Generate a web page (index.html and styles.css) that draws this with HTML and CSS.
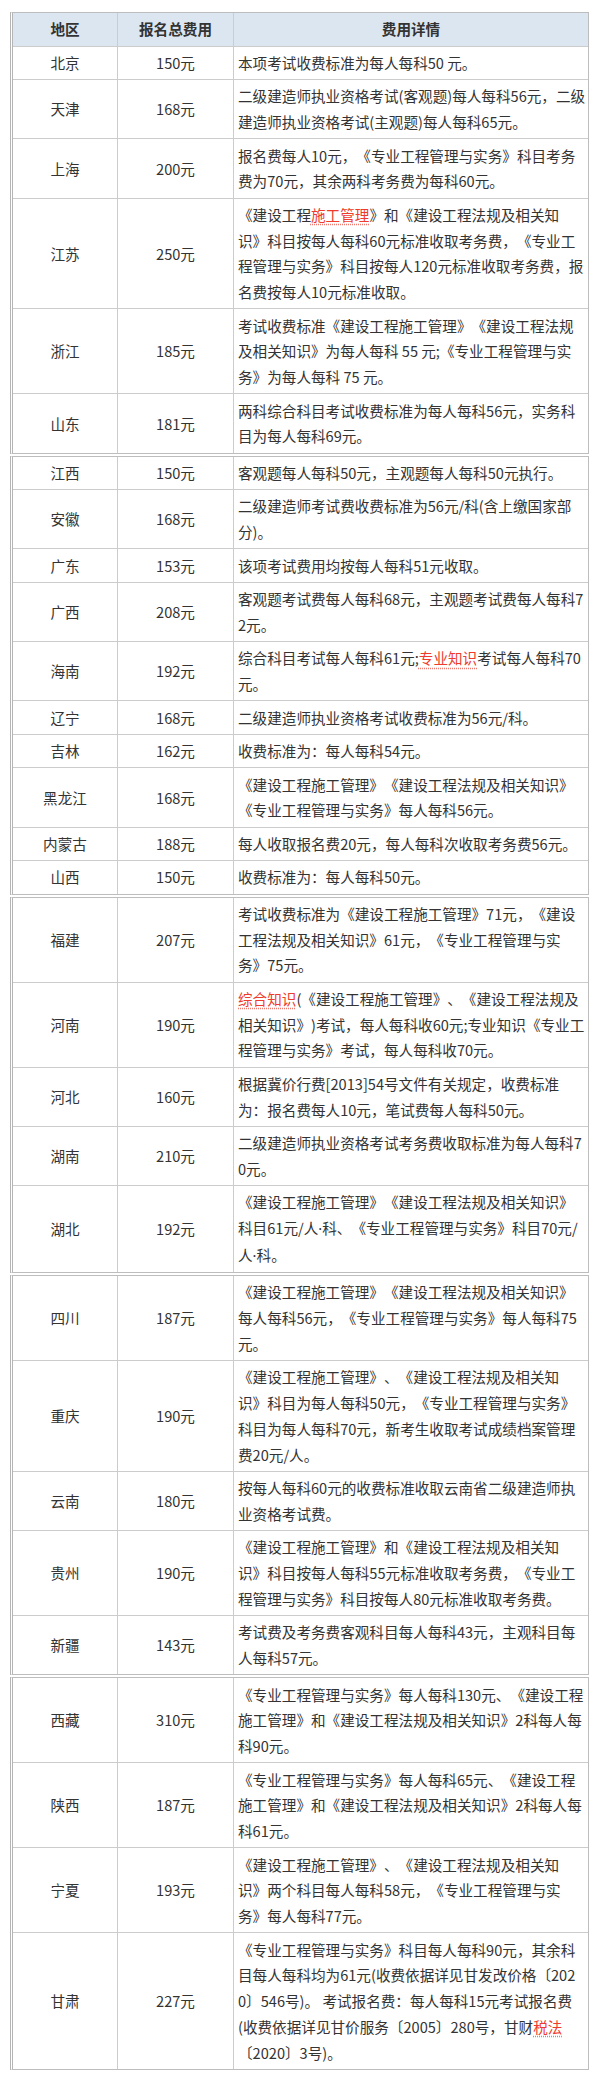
FILE: index.html
```html
<!DOCTYPE html>
<html lang="zh-CN">
<head>
<meta charset="utf-8">
<title>二级建造师报名费用</title>
<link rel="stylesheet" href="styles.css">
</head>
<body>
<div class="page">
  <table class="fee">
    <colgroup><col class="c1"><col class="c2"><col class="c3"></colgroup>
    <thead>
      <tr><th>地区</th><th>报名总费用</th><th>费用详情</th></tr>
    </thead>
    <tbody>
      <tr><td>北京</td><td>150元</td><td class="d">本项考试收费标准为每人每科50 元。</td></tr>
      <tr><td>天津</td><td>168元</td><td class="d">二级建造师执业资格考试(客观题)每人每科56元，二级<br>建造师执业资格考试(主观题)每人每科65元。</td></tr>
      <tr><td>上海</td><td>200元</td><td class="d">报名费每人10元，《专业工程管理与实务》科目考务<br>费为70元，其余两科考务费为每科60元。</td></tr>
      <tr><td>江苏</td><td>250元</td><td class="d">《建设工程<span class="kw">施工管理</span>》和《建设工程法规及相关知<br>识》科目按每人每科60元标准收取考务费，《专业工<br>程管理与实务》科目按每人120元标准收取考务费，报<br>名费按每人10元标准收取。</td></tr>
      <tr><td>浙江</td><td>185元</td><td class="d">考试收费标准《建设工程施工管理》《建设工程法规<br>及相关知识》为每人每科 55 元;《专业工程管理与实<br>务》为每人每科 75 元。</td></tr>
      <tr><td>山东</td><td>181元</td><td class="d">两科综合科目考试收费标准为每人每科56元，实务科<br>目为每人每科69元。</td></tr>
    </tbody>
  </table>

  <table class="fee">
    <colgroup><col class="c1"><col class="c2"><col class="c3"></colgroup>
    <tbody>
      <tr><td>江西</td><td>150元</td><td class="d">客观题每人每科50元，主观题每人每科50元执行。</td></tr>
      <tr><td>安徽</td><td>168元</td><td class="d">二级建造师考试费收费标准为56元/科(含上缴国家部<br>分)。</td></tr>
      <tr><td>广东</td><td>153元</td><td class="d">该项考试费用均按每人每科51元收取。</td></tr>
      <tr><td>广西</td><td>208元</td><td class="d">客观题考试费每人每科68元，主观题考试费每人每科7<br>2元。</td></tr>
      <tr><td>海南</td><td>192元</td><td class="d">综合科目考试每人每科61元;<span class="kw">专业知识</span>考试每人每科70<br>元。</td></tr>
      <tr><td>辽宁</td><td>168元</td><td class="d">二级建造师执业资格考试收费标准为56元/科。</td></tr>
      <tr><td>吉林</td><td>162元</td><td class="d">收费标准为：每人每科54元。</td></tr>
      <tr><td>黑龙江</td><td>168元</td><td class="d">《建设工程施工管理》《建设工程法规及相关知识》<br>《专业工程管理与实务》每人每科56元。</td></tr>
      <tr><td>内蒙古</td><td>188元</td><td class="d">每人收取报名费20元，每人每科次收取考务费56元。</td></tr>
      <tr><td>山西</td><td>150元</td><td class="d">收费标准为：每人每科50元。</td></tr>
    </tbody>
  </table>

  <table class="fee">
    <colgroup><col class="c1"><col class="c2"><col class="c3"></colgroup>
    <tbody>
      <tr><td>福建</td><td>207元</td><td class="d">考试收费标准为《建设工程施工管理》71元，《建设<br>工程法规及相关知识》61元，《专业工程管理与实<br>务》75元。</td></tr>
      <tr><td>河南</td><td>190元</td><td class="d"><span class="kw">综合知识</span>(《建设工程施工管理》、《建设工程法规及<br>相关知识》)考试，每人每科收60元;专业知识《专业工<br>程管理与实务》考试，每人每科收70元。</td></tr>
      <tr><td>河北</td><td>160元</td><td class="d">根据冀价行费[2013]54号文件有关规定，收费标准<br>为：报名费每人10元，笔试费每人每科50元。</td></tr>
      <tr><td>湖南</td><td>210元</td><td class="d">二级建造师执业资格考试考务费收取标准为每人每科7<br>0元。</td></tr>
      <tr><td>湖北</td><td>192元</td><td class="d">《建设工程施工管理》《建设工程法规及相关知识》<br>科目61元/人<span class="dot">·</span>科、《专业工程管理与实务》科目70元/<br>人<span class="dot">·</span>科。</td></tr>
    </tbody>
  </table>

  <table class="fee">
    <colgroup><col class="c1"><col class="c2"><col class="c3"></colgroup>
    <tbody>
      <tr><td>四川</td><td>187元</td><td class="d">《建设工程施工管理》《建设工程法规及相关知识》<br>每人每科56元，《专业工程管理与实务》每人每科75<br>元。</td></tr>
      <tr><td>重庆</td><td>190元</td><td class="d">《建设工程施工管理》、《建设工程法规及相关知<br>识》科目为每人每科50元，《专业工程管理与实务》<br>科目为每人每科70元，新考生收取考试成绩档案管理<br>费20元/人。</td></tr>
      <tr><td>云南</td><td>180元</td><td class="d">按每人每科60元的收费标准收取云南省二级建造师执<br>业资格考试费。</td></tr>
      <tr><td>贵州</td><td>190元</td><td class="d">《建设工程施工管理》和《建设工程法规及相关知<br>识》科目按每人每科55元标准收取考务费，《专业工<br>程管理与实务》科目按每人80元标准收取考务费。</td></tr>
      <tr><td>新疆</td><td>143元</td><td class="d">考试费及考务费客观科目每人每科43元，主观科目每<br>人每科57元。</td></tr>
    </tbody>
  </table>

  <table class="fee">
    <colgroup><col class="c1"><col class="c2"><col class="c3"></colgroup>
    <tbody>
      <tr><td>西藏</td><td>310元</td><td class="d">《专业工程管理与实务》每人每科130元、《建设工程<br>施工管理》和《建设工程法规及相关知识》2科每人每<br>科90元。</td></tr>
      <tr><td>陕西</td><td>187元</td><td class="d">《专业工程管理与实务》每人每科65元、《建设工程<br>施工管理》和《建设工程法规及相关知识》2科每人每<br>科61元。</td></tr>
      <tr><td>宁夏</td><td>193元</td><td class="d">《建设工程施工管理》、《建设工程法规及相关知<br>识》两个科目每人每科58元，《专业工程管理与实<br>务》每人每科77元。</td></tr>
      <tr><td>甘肃</td><td>227元</td><td class="d">《专业工程管理与实务》科目每人每科90元，其余科<br>目每人每科均为61元(收费依据详见甘发改价格〔202<br>0〕546号)。 考试报名费：每人每科15元考试报名费<br>(收费依据详见甘价服务〔2005〕280号，甘财<span class="kw">税法</span><br>〔2020〕3号)。</td></tr>
    </tbody>
  </table>
</div>
</body>
</html>
```

FILE: styles.css
```css
html, body {
  margin: 0;
  padding: 0;
  background: #ffffff;
}

.page {
  padding: 12px 0 0 10px;
  font-family: "Noto Sans CJK SC", "Noto Sans", sans-serif;
  font-size: 14.6px;
  color: #333333;
  text-spacing-trim: space-all;
  font-kerning: none;
}

.fee {
  width: 579px;
  table-layout: fixed;
  border-collapse: separate;
  border-spacing: 0;
  border: 1px solid #bdbdbd;
  border-left: 3px double #b5b5b5;
  margin: 0 0 2px 0;
}

.c1 { width: 105px; }
.c2 { width: 116px; }

.fee th,
.fee td {
  line-height: 25.75px;
  padding: 3.375px 4px;
  border-right: 1px solid #cccccc;
  border-bottom: 1px solid #cccccc;
  text-align: center;
  vertical-align: middle;
  font-weight: normal;
}

.fee th {
  background: #dce6f1;
  font-weight: bold;
  color: #333333;
}

.fee tr > :last-child {
  border-right: 0;
}

.fee tbody tr:last-child td {
  border-bottom: 0;
}

.fee td.d {
  text-align: left;
  white-space: nowrap;
  padding-left: 4px;
  padding-right: 0;
}

.dot {
  font-family: "Noto Sans", sans-serif;
}

.kw {
  color: #ee3b2e;
  text-decoration: underline dotted #f07a70;
  text-underline-offset: 3px;
}
```
